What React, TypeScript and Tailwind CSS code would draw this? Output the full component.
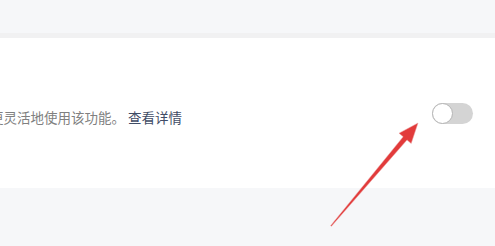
export default function App() {
  return (
    <div className="relative w-[495px] h-[246px] overflow-hidden bg-[#f6f7f9] font-['Noto_Sans_CJK_SC',sans-serif]">
      <div className="h-[33px]" />
      <div className="h-[5px] bg-[#f1f1f2]" />
      <div className="flex h-[150px] items-center justify-between bg-white pr-[22px]">
        <p className="-ml-[10px] mt-[8px] whitespace-nowrap text-[13.5px] leading-[20px] text-[#808080]">
          更灵活地使用该功能。
          <span className="ml-[3px] text-[#3f4c66]">查看详情</span>
        </p>
        <div className="flex h-[21px] w-[41px] items-center rounded-full bg-[#d4d4d4]">
          <div className="h-[21px] w-[21px] rounded-full border border-[#b5b5b5] bg-white" />
        </div>
      </div>
      <svg className="absolute inset-0" width="495" height="246" viewBox="0 0 495 246">
        <polygon
          points="330.6,225.7 403.2,136.7 399,133.2 418,123 411.2,143.5 407,139.9 331.4,226.3"
          fill="#e23b3b"
          stroke="#eaa5a5"
          strokeWidth="0.5"
        />
      </svg>
    </div>
  );
}
